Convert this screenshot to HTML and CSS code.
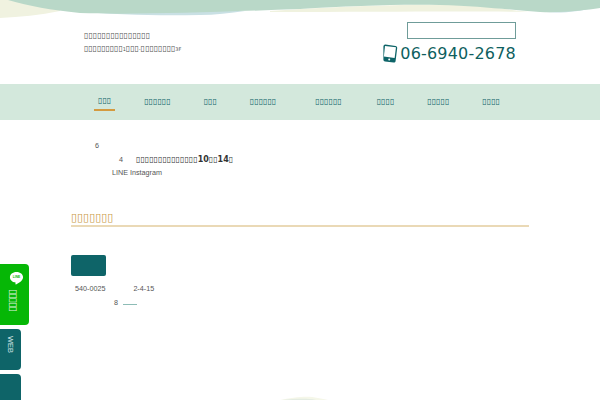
FILE: index.html
```html
<!DOCTYPE html>
<html lang="ja">
<head>
<meta charset="utf-8">
<title>Clinic</title>
<link rel="stylesheet" href="styles.css">
</head>
<body>
<div class="page">
  <svg class="wave-top" viewBox="0 0 600 18" preserveAspectRatio="none" aria-hidden="true">
    <path fill="#f0f2e0" d="M0 0H60V11C40 15 20 17 0 18Z"/>
    <path fill="#f0f2df" d="M270 11C340 6 430 3 480 6C500 8 515 11 530 12C470 11 380 12 270 12Z"/>
    <path fill="#c9e0e4" d="M70 11C120 15 160 16 200 15C215 15 230 13 245 11Z"/>
    <path fill="#c9e0e4" d="M530 10C550 14 575 13 592 8H530Z"/>
    <path fill="#b9d8c8" d="M8 0C30 6 50 10 80 13C130 15 220 12 300 9C350 6 400 4 440 5C480 6 510 10 540 12C565 13 585 10 600 8V0Z"/>
  </svg>
  <header class="site-head">
    <div class="addr">
      <p>▯▯▯▯▯▯▯▯▯▯▯▯▯▯▯</p>
      <p class="addr2">▯▯▯▯▯▯▯▯▯<small>1</small>▯▯▯<small>-</small>▯ ▯▯▯▯▯▯▯<small>3F</small></p>
    </div>
    <div class="contact">
      <div class="search"></div>
      <div class="tel">
        <svg class="tel-icon" viewBox="0 0 16 20" aria-hidden="true">
          <path fill="#0e6468" d="M3.400.6 13.600 2c1 .1 1.700 1 1.600 2l-1.600 13c-.1 1-1 1.700-2 1.600L3 17.600c-1-.1-1.700-1-1.600-2L1.400 2.600C1.500 1.300 2.400.500 3.400.6Z"/>
          <path fill="#fff" d="M3 1.900 14 3.300 12.600 14 1.900 12.600Z"/>
          <circle cx="7.200" cy="15.500" r="1" fill="#fff"/>
        </svg>
        <span>06-6940-2678</span>
      </div>
    </div>
  </header>
  <nav class="nav">
    <a class="cur">▯▯▯</a>
    <a>▯▯▯▯▯▯</a>
    <a>▯▯▯</a>
    <a class="wide">▯▯▯▯▯▯</a>
    <a class="wider">▯▯▯▯▯▯</a>
    <a>▯▯▯▯</a>
    <a>▯▯▯▯▯</a>
    <a>▯▯▯▯</a>
  </nav>
  <main class="main">
    <div class="notice">
      <p class="n1">6</p>
      <p class="n2"><span>4</span><b><i>▯▯▯▯▯▯▯▯▯▯▯▯▯▯</i>10<i>▯▯</i>14<i>▯</i></b></p>
      <p class="n3">LINE Instagram</p>
    </div>
    <h2 class="title">▯▯▯▯▯▯▯</h2>
    <div class="btn"></div>
    <p class="post"><span>540-0025</span><span>2-4-15</span></p>
    <p class="floor"><span>8</span><a></a></p>
  </main>
  <aside class="side">
    <a class="tab line">
      <svg class="line-icon" viewBox="0 0 16 16" aria-hidden="true">
        <path fill="#fff" d="M8 1C3.900 1 1 3.500 1 6.600c0 3 2.700 5.200 5.800 5.500L7 14.500c2.500-1.200 8-4 8-7.900C15 3.500 12.100 1 8 1Z"/>
        <text x="8" y="7.900" class="line-word">LINE</text>
      </svg>
      <span class="vert">▯▯▯▯▯</span>
    </a>
    <a class="tab web"><span class="web-word">WEB</span></a>
    <a class="tab blank"></a>
  </aside>
  <svg class="wave-bottom" viewBox="0 0 48 4" preserveAspectRatio="none" aria-hidden="true">
    <path fill="#f5f7e9" d="M0 4C10 2 24 0 32 1C38 2 44 3 48 4Z"/>
    <path fill="#e4ece2" d="M2 4C14 3 26 2 36 4Z"/>
  </svg>
</div>
</body>
</html>
```
FILE: styles.css
```css
* { box-sizing: border-box; }
html, body { margin: 0; height: 100%; overflow: hidden; background: #fff; }
body { font-family: "DejaVu Sans", sans-serif; color: #444; }
p, h2 { margin: 0; }
i { font-style: normal; font-weight: normal; }
small { font-size: 5px; }
.page { position: relative; width: 600px; height: 400px; overflow: hidden; }
.wave-top { display: block; width: 600px; height: 18px; }
.site-head { height: 66px; display: flex; justify-content: space-between; padding: 0 84px; }
.addr { padding-top: 11px; font-size: 8px; line-height: 13px; color: #555; white-space: nowrap; }
.addr2 { letter-spacing: -.1px; word-spacing: -2px; }
.contact { width: 133px; display: flex; flex-direction: column; align-items: flex-end; padding-top: 4px; }
.search { width: 109px; height: 17px; border: 1px solid #6f9c99; background: #fff; }
.tel { display: flex; align-items: center; gap: 2px; margin-top: 5px; color: #0e5f60; font-size: 16px; letter-spacing: .2px; line-height: 20px; white-space: nowrap; }
.tel-icon { width: 16px; height: 20px; }
.nav { height: 36px; background: #d3e8dc; display: flex; gap: 33px; padding-left: 94px; font-size: 8px; color: #0e6468; }
.nav a { padding-top: 13px; height: 27px; white-space: nowrap; }
.nav a.cur { padding: 12px 4px 0; margin-right: -4px; border-bottom: 2px solid #d49a3f; }
.nav a.wide { margin-right: 6px; }
.nav a.wider { margin-right: 2px; }
.main { padding: 0 71px; height: 280px; font-family: "Liberation Sans", sans-serif; font-size: 7.200px; color: #555; }
.notice { padding-top: 21px; }
.n1 { padding-left: 24px; line-height: 10px; }
.n2 { padding-left: 48px; display: flex; gap: 13px; line-height: 13px; margin-top: 2px; }
.n2 b { font-family: "DejaVu Sans", sans-serif; font-size: 8px; color: #333; }
.n3 { padding-left: 41px; line-height: 12px; margin-top: 1px; }
.title { margin-top: 31px; height: 17px; font-size: 11px; font-weight: normal; color: #c99a45; border-bottom: 2px solid #ead9b6; line-height: 15px; font-family: "DejaVu Sans", sans-serif; }
.btn { width: 35px; height: 21px; margin-top: 28px; background: #0e6468; border-radius: 2px; }
.post { display: flex; gap: 28px; padding-left: 4px; margin-top: 7px; line-height: 12px; }
.floor { display: flex; gap: 5px; align-items: center; padding-left: 43px; margin-top: 1px; line-height: 13px; }
.floor a { display: block; width: 14px; height: 5px; border-bottom: 1px solid #8dbcb6; }
.side { position: absolute; left: 0; top: 264px; display: flex; flex-direction: column; align-items: flex-start; gap: 4px; }
.tab { display: flex; flex-direction: column; align-items: center; color: #fff; border-radius: 0 4px 4px 0; }
.line { width: 29px; height: 61px; background: #06b706; padding-top: 7px; gap: 3px; }
.line-icon { width: 15px; height: 15px; margin-left: 4px; }
.line-word { font: bold 3.500px "Liberation Sans", sans-serif; fill: #06b706; text-anchor: middle; }
.web, .blank { width: 21px; background: #0e6468; }
.web { height: 41px; padding-top: 7px; }
.blank { height: 30px; }
.vert { writing-mode: vertical-rl; text-orientation: sideways; font-size: 10px; letter-spacing: -1.200px; line-height: 10px; color: #dff2df; margin-right: 4px; }
.web-word { writing-mode: vertical-rl; font-family: "Liberation Sans", sans-serif; font-size: 7.500px; color: #cfe2e2; }
.wave-bottom { position: absolute; left: 280px; bottom: 0; width: 48px; height: 4px; }
```
